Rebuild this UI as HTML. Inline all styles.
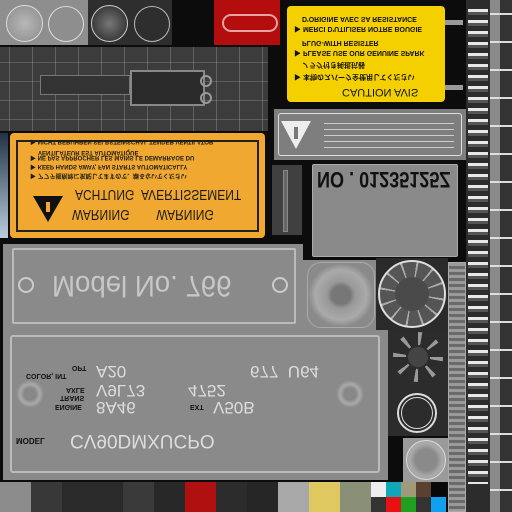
<!DOCTYPE html><html><head><style>
*{margin:0;padding:0;box-sizing:border-box}
body{width:512px;height:512px;background:#0c0c0c;position:relative;overflow:hidden;font-family:"Liberation Sans","Noto Sans CJK JP",sans-serif}
div{position:absolute}
.f{transform:scaleY(-1)}
.t{position:absolute;white-space:nowrap;font-weight:bold}
</style></head><body>
<div style="left:0;top:0;width:88px;height:45px;background:#8e8e8e"></div>
<div style="left:6px;top:5px;width:37px;height:37px;border-radius:50%;background:radial-gradient(#b8b8b8,#8a8a8a);border:1px solid #ddd"></div>
<div style="left:48px;top:6px;width:36px;height:36px;border-radius:50%;border:1px solid #ddd"></div>
<div style="left:88px;top:0;width:84px;height:45px;background:#2e2e2e"></div>
<div style="left:91px;top:5px;width:37px;height:37px;border-radius:50%;background:radial-gradient(#777,#222);border:1px solid #ccc"></div>
<div style="left:134px;top:6px;width:36px;height:36px;border-radius:50%;border:1px solid #bbb"></div>
<div style="left:214px;top:0;width:66px;height:45px;background:#b40d0d"></div>
<div style="left:222px;top:14px;width:56px;height:18px;border-radius:9px;border:2px solid #e8a0a0"></div>
<div style="left:0;top:47px;width:268px;height:84px;background:#3c3c3c"></div>
<div style="left:0;top:47px;width:268px;height:84px;background:repeating-linear-gradient(90deg,transparent 0 9px,rgba(170,170,170,.35) 9px 10px,transparent 10px 23px),repeating-linear-gradient(0deg,transparent 0 11px,rgba(170,170,170,.3) 11px 12px,transparent 12px 19px)"></div>
<div style="left:130px;top:70px;width:75px;height:36px;border:2px solid #888;background:#2a2a2a"></div>
<div style="left:40px;top:75px;width:90px;height:20px;border:1px solid #777;background:#333"></div>
<div style="left:200px;top:75px;width:12px;height:12px;border-radius:50%;border:2px solid #999"></div>
<div style="left:200px;top:92px;width:12px;height:12px;border-radius:50%;border:2px solid #999"></div>
<div style="left:0;top:133px;width:8px;height:105px;background:linear-gradient(#234,#bcd)"></div>
<div style="left:10px;top:133px;width:255px;height:105px;background:#f0a830;border-radius:4px"></div>
<div style="left:16px;top:140px;width:243px;height:92px;border:2px solid #222"></div>
<div class="f" style="left:20px;top:143px;width:235px;height:86px;color:#1a1a1a">
<div class="t" style="left:52px;top:6px;font-size:15px;font-weight:normal;transform:scaleX(.8);transform-origin:left">WARNING&nbsp;&nbsp;&nbsp;&nbsp;&nbsp;&nbsp;&nbsp;&nbsp;WARNING</div>
<div class="t" style="left:55px;top:26px;font-size:15px;font-weight:normal;transform:scaleX(.8);transform-origin:left">ACHTUNG&nbsp;&nbsp;AVERTISSEMENT</div>
<div class="t" style="left:10px;top:48px;font-size:6px">▶ アフテ掘削除に気配してますので、離るないでください</div>
<div class="t" style="left:10px;top:57px;font-size:6px">▶ KEEP HANDS AWAY, FAN STARTS AUTOMATICALLY</div>
<div class="t" style="left:10px;top:66px;font-size:6px">▶ NE PAS APPROCHER LES MAINS LE DEMARRAGE DU</div>
<div class="t" style="left:18px;top:74px;font-size:6px">VENTILATEUR EST AUTOMATIQUE</div>
<div class="t" style="left:10px;top:82px;font-size:6px">▶ NICHT BERUHREN SELBSTEINSCHAL TENDER VENTILATOR</div>
</div>
<div style="left:33px;top:196px;width:0;height:0;border-left:15px solid transparent;border-right:15px solid transparent;border-top:26px solid #111"></div>
<div style="left:46px;top:202px;width:4px;height:10px;background:#f0a830"></div>
<div style="left:287px;top:6px;width:158px;height:96px;background:#f5d000;border-radius:4px"></div>
<div class="f" style="left:290px;top:8px;width:155px;height:92px;color:#111">
<div class="t" style="left:52px;top:2px;font-size:11px;font-weight:normal">CAUTION AVIS</div>
<div class="t" style="left:4px;top:18px;font-size:7px">▶ 本物のスパーク全使用してください</div>
<div class="t" style="left:12px;top:30px;font-size:7px">ノラグ付き純抵抗器</div>
<div class="t" style="left:4px;top:42px;font-size:7px">▶ PLEASE USE OUR GENUINE SPARK</div>
<div class="t" style="left:12px;top:54px;font-size:7px">PLUG-WITH RESISTER</div>
<div class="t" style="left:4px;top:66px;font-size:7px">▶ MERCI D'UTILISER NOTRE BOUGIE</div>
<div class="t" style="left:12px;top:78px;font-size:7px">D'ORIGINE AVEC SA RESISTANCE</div>
</div>
<div style="left:274px;top:109px;width:192px;height:51px;background:#7e7e7e"></div>
<div style="left:278px;top:113px;width:184px;height:43px;border:1px solid #ddd;border-radius:3px"></div>
<div style="left:281px;top:121px;width:0;height:0;border-left:15px solid transparent;border-right:15px solid transparent;border-top:28px solid #eee"></div>
<div style="left:294px;top:127px;width:4px;height:12px;background:#777"></div>
<div style="left:324px;top:120px;width:130px;height:30px;background:repeating-linear-gradient(#7e7e7e 0 3px,#ccc 3px 4px,#7e7e7e 4px 6px)"></div>
<div style="left:272px;top:165px;width:30px;height:70px;background:#404040"></div>
<div style="left:283px;top:170px;width:5px;height:62px;background:#666;border:1px solid #888"></div>
<div style="left:312px;top:164px;width:146px;height:93px;background:#8a8a8a;border:1px solid #aaa;border-radius:2px"></div>
<div class="t" style="left:317px;top:166px;font-size:22px;color:#111;transform:scaleY(-1) scaleX(.82);transform-origin:left">NO . 01235125Z</div>
<div style="left:466px;top:0;width:24px;height:512px;background:#2c2c2c"></div>
<div style="left:468px;top:4px;width:20px;height:480px;background:repeating-linear-gradient(#2c2c2c 0 5px,#e8e8e8 5px 8px,#555 8px 11px)"></div>
<div style="left:490px;top:0;width:10px;height:512px;background:#8a8a8a"></div>
<div style="left:500px;top:0;width:12px;height:512px;background:#333"></div>
<div style="left:490px;top:0;width:22px;height:512px;background:repeating-linear-gradient(transparent 0 13px,#ddd 13px 15px,transparent 15px 28px)"></div>
<div style="left:448px;top:262px;width:18px;height:250px;background:repeating-linear-gradient(#9a9a9a 0 3px,#6a6a6a 3px 6px);border:1px solid #aaa"></div>
<div style="left:445px;top:20px;width:18px;height:5px;background:#999"></div>
<div style="left:445px;top:85px;width:18px;height:5px;background:#999"></div>
<div style="left:3px;top:244px;width:300px;height:94px;background:#8a8a8a"></div>
<div style="left:12px;top:248px;width:284px;height:76px;border:2px solid #bbb;border-radius:2px"></div>
<div class="t" style="left:52px;top:268px;font-size:30px;font-weight:normal;color:#c8c8c8;transform:scaleY(-1) scaleX(.92);transform-origin:left">Model No. 766</div>
<div style="left:18px;top:277px;width:16px;height:16px;border-radius:50%;border:2px solid #ccc"></div>
<div style="left:272px;top:277px;width:16px;height:16px;border-radius:50%;border:2px solid #ccc"></div>
<div style="left:303px;top:260px;width:80px;height:78px;background:#8a8a8a"></div>
<div style="left:307px;top:262px;width:68px;height:66px;border-radius:14px;background:radial-gradient(#777 20%,#999 30%,#aaa 55%,#8a8a8a 70%);border:1px solid #aaa"></div>
<div style="left:3px;top:330px;width:385px;height:150px;background:#8a8a8a"></div>
<div style="left:10px;top:335px;width:370px;height:138px;border:2px solid #bbb;border-radius:3px"></div>
<div style="left:16px;top:380px;width:28px;height:28px;border-radius:50%;background:radial-gradient(#888 30%,#aaa 50%,#8a8a8a 70%)"></div>
<div style="left:336px;top:380px;width:28px;height:28px;border-radius:50%;background:radial-gradient(#888 30%,#aaa 50%,#8a8a8a 70%)"></div>
<div class="f" style="left:0;top:335px;width:380px;height:140px;color:#111">
<div class="t" style="left:16px;top:30px;font-size:8px">MODEL</div>
<div class="t" style="left:70px;top:24px;font-size:19px;font-weight:normal;color:#ddd">CV90DMXUCPO</div>
<div class="t" style="left:55px;top:65px;font-size:7px">ENGINE</div>
<div class="t" style="left:96px;top:58px;font-size:17px;font-weight:normal;color:#ddd">8A46</div>
<div class="t" style="left:190px;top:65px;font-size:7px">EXT</div>
<div class="t" style="left:213px;top:58px;font-size:17px;font-weight:normal;color:#ddd">V50B</div>
<div class="t" style="left:60px;top:74px;font-size:7px">TRANS</div>
<div class="t" style="left:66px;top:82px;font-size:7px">AXLE</div>
<div class="t" style="left:96px;top:75px;font-size:17px;font-weight:normal;color:#ddd">V9L73</div>
<div class="t" style="left:188px;top:75px;font-size:17px;font-weight:normal;color:#ddd">4752</div>
<div class="t" style="left:26px;top:96px;font-size:7px">COLOR, INT</div>
<div class="t" style="left:72px;top:104px;font-size:7px">OPT</div>
<div class="t" style="left:96px;top:94px;font-size:17px;font-weight:normal;color:#ddd">A20</div>
<div class="t" style="left:250px;top:94px;font-size:17px;font-weight:normal;color:#ddd">677&nbsp;&nbsp;U64</div>
</div>
<div style="left:376px;top:258px;width:72px;height:72px;background:#2a2a2a"></div>
<div style="left:378px;top:260px;width:68px;height:68px;border-radius:50%;background:repeating-conic-gradient(#555 0 8deg,#aaa 8deg 12deg,#555 12deg 30deg);border:2px solid #ddd"></div>
<div style="left:395px;top:277px;width:34px;height:34px;border-radius:50%;background:#4a4a4a"></div>
<div style="left:388px;top:330px;width:60px;height:56px;background:#2c2c2c"></div>
<div style="left:393px;top:332px;width:50px;height:50px;border-radius:50%;background:repeating-conic-gradient(#999 0 10deg,transparent 10deg 45deg)"></div>
<div style="left:406px;top:345px;width:24px;height:24px;border-radius:50%;background:#444;border:2px solid #2c2c2c"></div>
<div style="left:388px;top:386px;width:60px;height:50px;background:#2c2c2c"></div>
<div style="left:397px;top:393px;width:40px;height:40px;border-radius:50%;border:2px solid #ddd"></div>
<div style="left:401px;top:397px;width:32px;height:32px;border-radius:50%;border:1px solid #ddd"></div>
<div style="left:403px;top:438px;width:45px;height:44px;background:#9a9a9a"></div>
<div style="left:406px;top:440px;width:40px;height:40px;border-radius:50%;background:radial-gradient(#8a8a8a 40%,#aaa 60%,#9a9a9a);border:1px solid #ddd"></div>
<div style="left:0;top:482px;width:31px;height:30px;background:#8c8c8c"></div>
<div style="left:31px;top:482px;width:31px;height:30px;background:#383838"></div>
<div style="left:62px;top:482px;width:61px;height:30px;background:#2a2a2a"></div>
<div style="left:123px;top:482px;width:31px;height:30px;background:#3a3a3a"></div>
<div style="left:154px;top:482px;width:31px;height:30px;background:#282828"></div>
<div style="left:185px;top:482px;width:31px;height:30px;background:#b01010"></div>
<div style="left:216px;top:482px;width:31px;height:30px;background:#2c2c2c"></div>
<div style="left:247px;top:482px;width:31px;height:30px;background:#262626"></div>
<div style="left:278px;top:482px;width:31px;height:30px;background:#a8a8a8"></div>
<div style="left:309px;top:482px;width:31px;height:30px;background:#e0c860"></div>
<div style="left:340px;top:482px;width:31px;height:30px;background:#8a9078"></div>
<div style="left:371px;top:482px;width:15px;height:15px;background:#eee"></div><div style="left:371px;top:497px;width:15px;height:15px;background:#333"></div>
<div style="left:386px;top:482px;width:15px;height:15px;background:#10a8b8"></div><div style="left:386px;top:497px;width:15px;height:15px;background:#e81010"></div>
<div style="left:401px;top:482px;width:15px;height:15px;background:#a09a78"></div><div style="left:401px;top:497px;width:15px;height:15px;background:#20a020"></div>
<div style="left:416px;top:482px;width:15px;height:15px;background:#5a4030"></div><div style="left:416px;top:497px;width:15px;height:15px;background:#333"></div>
<div style="left:431px;top:482px;width:15px;height:15px;background:#080808"></div><div style="left:431px;top:497px;width:15px;height:15px;background:#10a0f0"></div>
</body></html>
